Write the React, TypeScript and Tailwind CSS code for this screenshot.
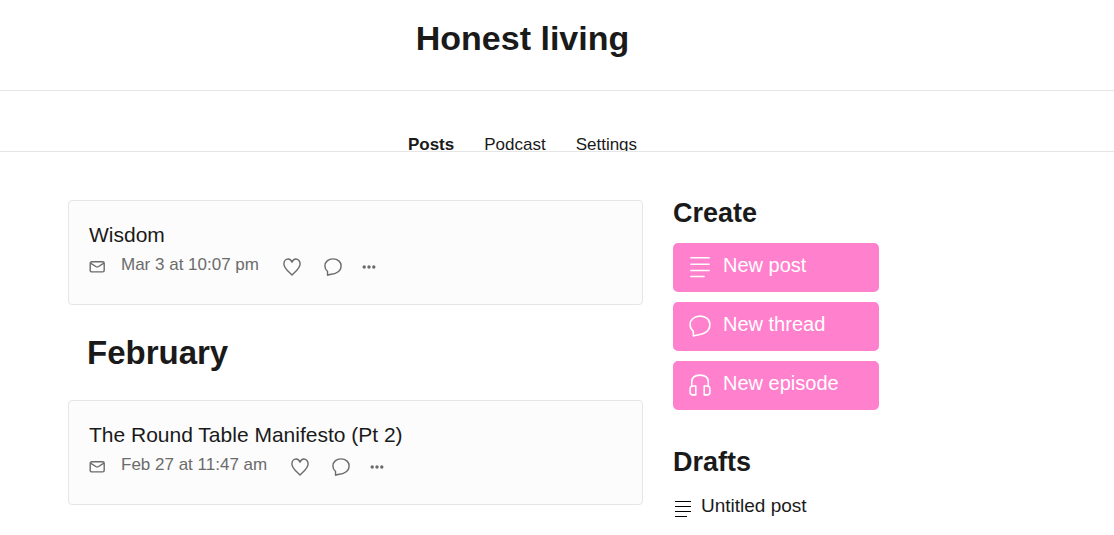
import React from "react";

type IconProps = { className?: string };

function EnvelopeIcon({ className }: IconProps) {
  return (
    <svg className={className} viewBox="0 0 16 12" fill="none" stroke="currentColor" strokeWidth="1.4" strokeLinejoin="round" aria-hidden="true">
      <rect x="1.2" y="0.7" width="14" height="10.2" rx="1.6" />
      <path d="M1.5 2.2 L6.8 5.5 Q8.2 6.3 9.6 5.5 L14.9 2.2" />
    </svg>
  );
}

function HeartIcon({ className }: IconProps) {
  return (
    <svg className={className} viewBox="0 0 18 18" fill="none" stroke="currentColor" strokeWidth="1.4" strokeLinejoin="round" aria-hidden="true">
      <path d="M9 4.2 C8.2 2 6.8 1 5.2 1 C2.6 1 0.9 3.2 0.9 6 C0.9 10.2 5 13.2 9 17 C13 13.2 17.1 10.2 17.1 6 C17.1 3.2 15.4 1 12.8 1 C11.2 1 9.8 2 9 4.2 Z" />
    </svg>
  );
}

function BubbleIcon({ className, strokeWidth = 1.7 }: IconProps & { strokeWidth?: number }) {
  return (
    <svg className={className} viewBox="0 0 24 24" fill="none" stroke="currentColor" strokeWidth={strokeWidth} strokeLinejoin="round" aria-hidden="true">
      <path d="M12 1.2 C18.2 1.2 22.8 5 22.8 10.4 C22.8 15.4 19.6 18.8 15 20.4 C11.6 21.5 8 21.9 4.8 22.9 C4.6 20.8 4.9 19.2 4.6 17.6 C2.6 16 1.2 13.6 1.2 10.6 C1.2 5 5.8 1.2 12 1.2 Z" />
    </svg>
  );
}

function DotsIcon({ className }: IconProps) {
  return (
    <svg className={className} viewBox="0 0 14 4" fill="currentColor" aria-hidden="true">
      <circle cx="2.2" cy="2" r="1.7" />
      <circle cx="7" cy="2" r="1.7" />
      <circle cx="11.8" cy="2" r="1.7" />
    </svg>
  );
}

function LinesIcon({ className }: IconProps) {
  return (
    <svg className={className} viewBox="0 0 24 24" fill="none" stroke="currentColor" strokeWidth="1.6" strokeLinecap="round" aria-hidden="true">
      <path d="M2 2 H22 M2 8.9 H22 M2 15.8 H22 M2 22.3 H16.5" />
    </svg>
  );
}

function DraftIcon({ className }: IconProps) {
  return (
    <svg className={className} viewBox="0 0 18 18" fill="none" stroke="currentColor" strokeWidth="1.2" aria-hidden="true">
      <path d="M1 1.5 H17 M1 6.5 H17 M1 11.5 H17 M1 16.5 H13" />
    </svg>
  );
}

function HeadphonesIcon({ className }: IconProps) {
  return (
    <svg className={className} viewBox="0 0 24 24" fill="none" stroke="currentColor" strokeWidth="1.7" strokeLinejoin="round" aria-hidden="true">
      <path d="M3 13.2 V8.8 C3 4 6.2 1.2 12 1.2 C17.8 1.2 21 4 21 8.8 V13.2" />
      <path d="M7.4 13 H4.2 Q1.2 13.2 1.2 16.2 V19.8 Q1.2 22.6 4.2 22.8 H7.4 Z" />
      <path d="M16.6 13 H19.8 Q22.8 13.2 22.8 16.2 V19.8 Q22.8 22.6 19.8 22.8 H16.6 Z" />
    </svg>
  );
}

function PostCard({ title, date }: { title: string; date: string }) {
  return (
    <article className="rounded border border-[#e6e6e6] bg-[#fcfcfc] px-5 pt-5 pb-[19px]">
      <h3 className="text-[21px] leading-7">
        <a href="#post">{title}</a>
      </h3>
      <div className="flex h-9 items-center text-[#6b6b6b]">
        <EnvelopeIcon className="mr-4 h-3 w-4" />
        <time className="pb-1 text-[17px] leading-6">{date}</time>
        <button type="button" aria-label="Like" className="ml-6">
          <HeartIcon className="size-4.5" />
        </button>
        <button type="button" aria-label="Comment" className="ml-[23px]">
          <BubbleIcon className="size-4.5" strokeWidth={1.9} />
        </button>
        <button type="button" aria-label="More" className="ml-5">
          <DotsIcon className="h-1 w-3.5" />
        </button>
      </div>
    </article>
  );
}

function CreateButton({ icon, label }: { icon: React.ReactNode; label: string }) {
  return (
    <button type="button" className="flex h-[49px] w-full items-center gap-3 rounded-[5px] bg-[#ff81cd] px-4 text-white">
      <span className="pb-0.5">{icon}</span>
      <span className="pb-1.5 text-[20px] leading-6">{label}</span>
    </button>
  );
}

export default function App() {
  return (
    <div className="min-h-screen bg-white font-['Liberation_Sans',Arial,sans-serif] text-[#1a1a1a]">
      <header className="border-b border-[#e6e6e6] pt-[18px] pr-[69px] pb-8 text-center">
        <h1 className="text-[34px] leading-10 font-bold">Honest living</h1>
      </header>
      <nav className="flex h-[61px] justify-center gap-[30px] overflow-hidden border-b border-[#e6e6e6] pt-11 pr-[69px] text-[17px] leading-5">
        <a href="#posts" className="font-bold">Posts</a>
        <a href="#podcast">Podcast</a>
        <a href="#settings">Settings</a>
      </nav>
      <div className="ml-17 flex max-w-[811px] gap-[30px] pt-12">
        <main className="min-w-0 flex-1">
          <PostCard title="Wisdom" date="Mar 3 at 10:07 pm" />
          <h2 className="px-[19px] pt-7 pb-[27px] text-[33px] leading-10 font-bold">February</h2>
          <PostCard title="The Round Table Manifesto (Pt 2)" date="Feb 27 at 11:47 am" />
        </main>
        <aside className="w-[206px] shrink-0">
          <h2 className="pt-px pb-[18px] text-[27px] leading-6 font-bold">Create</h2>
          <div className="flex flex-col gap-2.5">
            <CreateButton icon={<LinesIcon className="size-[22px]" />} label="New post" />
            <CreateButton icon={<BubbleIcon className="size-[22px]" />} label="New thread" />
            <CreateButton icon={<HeadphonesIcon className="size-[22px]" />} label="New episode" />
          </div>
          <h2 className="pt-10 pb-5 text-[27px] leading-6 font-bold">Drafts</h2>
          <a href="#draft" className="flex items-end gap-[9px] pl-px text-[19px] leading-6">
            <DraftIcon className="size-4.5 text-black" />
            <span>Untitled post</span>
          </a>
        </aside>
      </div>
    </div>
  );
}
